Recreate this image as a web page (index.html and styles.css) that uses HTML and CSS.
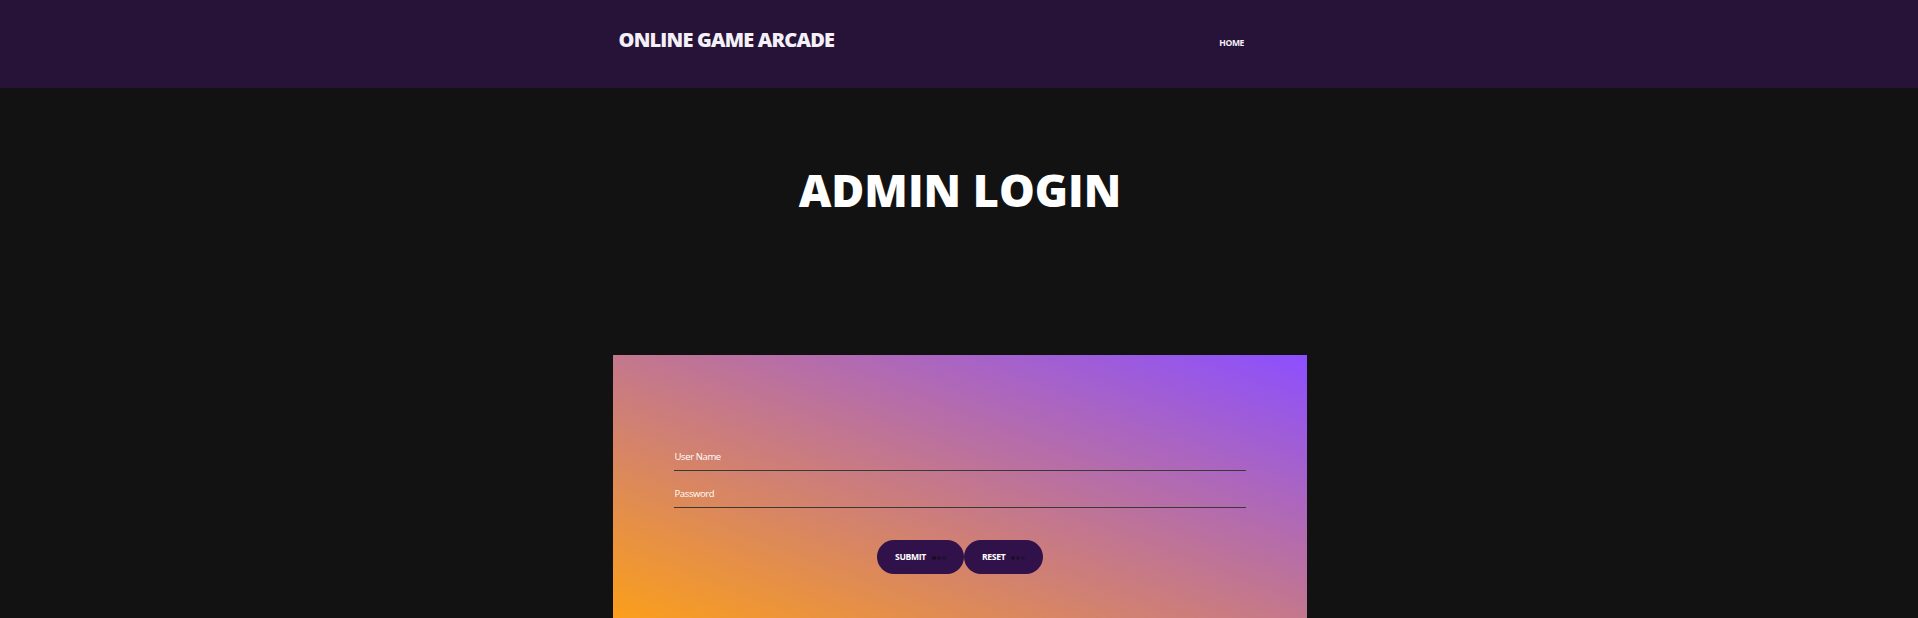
FILE: index.html
```
<!DOCTYPE html>
<html lang="en">
<head>
<meta charset="utf-8">
<title>Online Game Arcade</title>
<link rel="stylesheet" href="styles.css">
</head>
<body>
<header class="header">
  <div class="header-inner">
    <a class="brand">ONLINE GAME ARCADE</a>
    <nav><a class="nav-link">HOME</a></nav>
  </div>
</header>
<main>
  <h1 class="title">ADMIN LOGIN</h1>
  <form class="card">
    <input class="field" type="text" placeholder="User Name">
    <input class="field" type="password" placeholder="Password">
    <div class="actions">
      <button class="btn submit" type="button"><span class="label">SUBMIT</span><svg class="dots" width="16" height="6" viewBox="0 0 16 6"><ellipse class="d1" cx="3" cy="3" rx="2.3" ry="1.8"/><ellipse class="d2" cx="8" cy="3" rx="2.1" ry="1.7"/><ellipse class="d3" cx="13" cy="3" rx="2.1" ry="1.7"/></svg></button>
      <button class="btn reset" type="button"><span class="label">RESET</span><svg class="dots" width="16" height="6" viewBox="0 0 16 6"><circle class="d1" cx="3" cy="3" r="1.8"/><circle class="d2" cx="8" cy="3" r="1.8"/><circle class="d3" cx="13" cy="3" r="1.8"/></svg></button>
    </div>
  </form>
</main>
</body>
</html>
```
FILE: styles.css
```
* { box-sizing: border-box; }
body { margin: 0; background: #121212; color: #fff; font-family: "Open Sans", sans-serif; overflow: hidden; }
.header { height: 88px; background: #271238; }
.header-inner { width: 682px; margin: 0 auto; padding: 26px 56px 0 0.5px; display: flex; justify-content: space-between; }
.brand { font-size: 20px; line-height: 28px; font-weight: 800; letter-spacing: -0.8px; color: #f4f0f7; }
.nav-link { display: block; padding-top: 11px; font-size: 8.6px; line-height: 12px; font-weight: 700; letter-spacing: -0.4px; color: #f4f0f7; }
.title { margin: 0; padding: 71px 0 0 2px; height: 267px; font-size: 45px; line-height: 61px; font-weight: 800; text-align: center; }
.card { width: 694px; height: 263px; margin: 0 0 0 613px; padding: 84px 61px 0; background: linear-gradient(to top right, #fb9f1b, #8c4fff); }
.field { display: block; width: 572px; height: 32px; margin: 0 0 5px; padding: 3px 0 0 0.5px; border: 0; border-bottom: 1px solid #3b3838; background: none; font: 400 9.5px "Open Sans", sans-serif; letter-spacing: -0.38px; color: #fff; outline: 0; }
.field::placeholder { color: #fff; opacity: 1; }
.actions { display: flex; justify-content: center; padding-top: 27px; }
.btn { display: flex; align-items: center; justify-content: space-between; height: 34px; padding: 0 17px 0 18px; border: 0; border-radius: 17px; background: #311149; color: #fff; font: 700 8.6px "Open Sans", sans-serif; }
.submit { width: 87px; }
.reset { width: 79px; }
.label { letter-spacing: -0.35px; padding-bottom: 1px; }
.dots { margin-top: 2px; fill: #151018; }
.d2 { opacity: .65; }
.d3 { opacity: .4; }
```
